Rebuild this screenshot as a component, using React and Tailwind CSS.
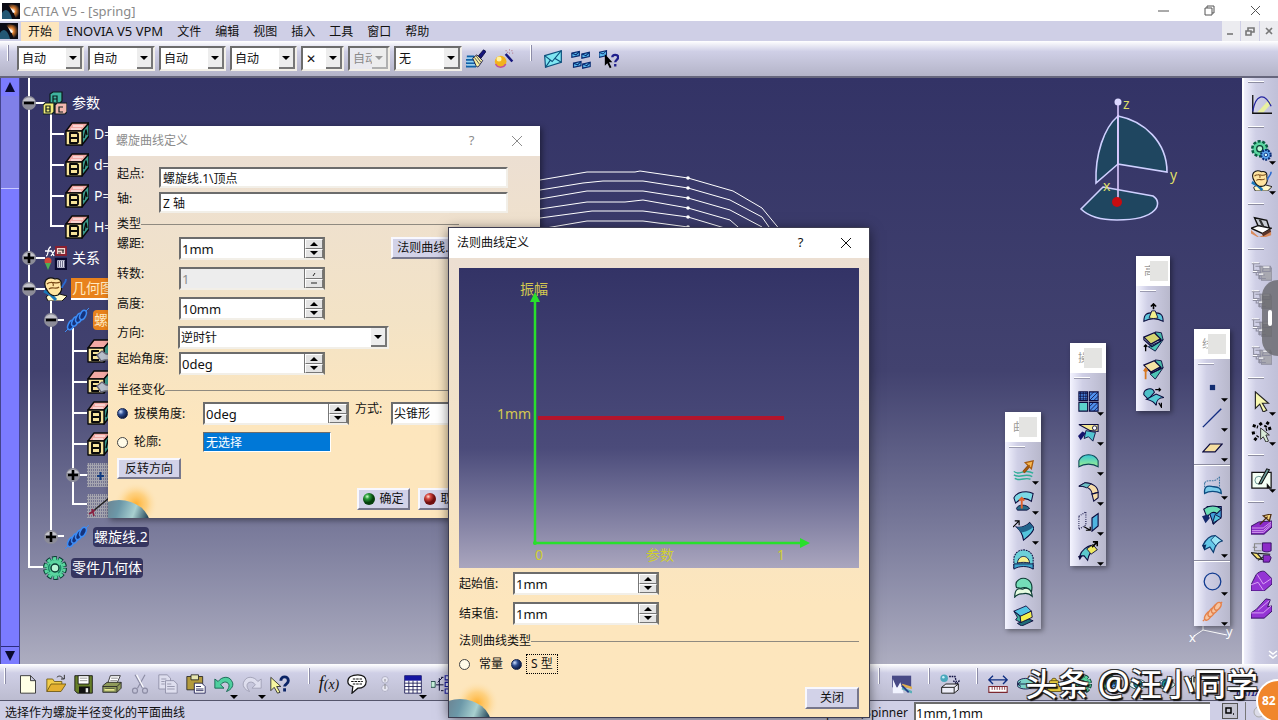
import React from "react";

const K = "#0a0a3c";

/* ---------- icon drawings, 24 x 24 ---------- */
const art = {
  brush: (
    <>
      <path d="M1 9h9M0 13h10M0 17h12M0 21h12" stroke="#0f62a8" strokeWidth="2.200" />
      <path d="M1 11h8M1 15h9M1 19h11" stroke="#8cd4f4" strokeWidth="1.500" />
      <path d="M8 11l5-4 7 7-5 7c-1 1-3 0-3-1z" fill="#f7f0a0" stroke={K} />
      <path d="M10 10l6 8M12 8l6 8" stroke={K} strokeWidth=".8" />
      <path d="M15 8l6-7 3 2-6 8z" fill="#15157c" stroke={K} />
    </>
  ),
  wand: (
    <>
      <circle cx="8" cy="15" r="7" fill="#f2b21c" />
      <circle cx="6" cy="12" r="3" fill="#fff3a0" />
      <path d="M2 18c2 5 10 5 12 0" stroke="#c0509c" strokeWidth="1.800" fill="none" />
      <path d="M14 6l8 9" stroke="#15157c" strokeWidth="3" />
      <path d="M14 2h1M18 1h1M18 5h1M21 2h1M16 4h1M22 5h1" stroke="#b07080" strokeWidth="1.400" />
    </>
  ),
  envelope: (
    <>
      <path d="M2 8l20-6v14L3 22z" fill="#7fe6f2" stroke="#0b4f7c" strokeWidth="1.400" />
      <path d="M2 8l9 7L22 2M3 22l6-9M22 16l-8-5" stroke="#0b4f7c" strokeWidth="1.300" fill="none" />
    </>
  ),
  envelopes: (
    <>
      {[[1, 3], [13, 4], [3, 15], [14, 16]].map(([x, y]) => (
        <g key={x + "-" + y} transform={`translate(${x} ${y})`}>
          <path d="M0 2l9-2v5l-9 2z" fill="#5bbcf0" stroke="#082a70" strokeWidth="1.400" />
          <path d="M0 2l5 2 4-4" stroke="#082a70" strokeWidth="1.300" fill="none" />
        </g>
      ))}
    </>
  ),
  envelopeHelp: (
    <>
      <path d="M0 4l9-2v6l-9 2z" fill="#5bbcf0" stroke="#082a70" strokeWidth="1.300" />
      <path d="M0 4l5 2 4-4" stroke="#082a70" strokeWidth="1.100" fill="none" />
      <path d="M7 6v14l3-3 3 6 2-1-3-6h4z" fill="#000" />
      <path d="M16 10c0-4 7-4 7 0 0 3-3.500 3-3.500 6M19.500 18v3" stroke="#20208c" strokeWidth="2.800" fill="none" />
    </>
  ),
  newFile: <path d="M3 2h12l6 6v15H3zM15 2v6h6" fill="#ffffe6" stroke="#222" />,
  open: (
    <>
      <path d="M1 21V6h7l2 3h9v4" fill="#f2cd4a" stroke="#6a5510" />
      <path d="M1 21l5-9h18l-6 9z" fill="#e4b030" stroke="#6a5510" />
      <path d="M13 4c3-3 6-1 8 2M22 1v5h-4" stroke="#333" fill="none" strokeWidth="1.200" />
    </>
  ),
  save: (
    <>
      <path d="M1 2h21v21H4l-3-3z" fill="#667e28" stroke="#111" />
      <path d="M5 2h13v10H5z" fill="#fff" stroke="#111" />
      <path d="M7 5h9M7 8h9" stroke="#888" />
      <path d="M6 15h13v8H6z" fill="#111" />
      <path d="M14 17h3v5h-3z" fill="#eee" />
    </>
  ),
  print: (
    <>
      <path d="M7 11l3-9h12l-4 9" fill="#fff" stroke="#222" />
      <path d="M11 5h8M10 8h8" stroke="#777" />
      <path d="M1 14l5-4h17v7l-5 5H1z" fill="#8f9a5a" stroke="#222" />
      <path d="M1 15h17l5-5M18 15v7M4 18h11" stroke="#222" fill="none" />
      <path d="M3 18h12v2H3z" fill="#e8e890" />
    </>
  ),
  cut: (
    <g stroke="#8c8ca4" strokeWidth="1.400" fill="none">
      <path d="M6 1l9 16M18 1L9 17" />
      <circle cx="6" cy="20" r="3" /><circle cx="18" cy="20" r="3" />
      <path d="M8 1l8 15" stroke="#fff" />
    </g>
  ),
  copy: (
    <g stroke="#8c8ca4" fill="#dedeee">
      <path d="M1 1h10l4 4v13H1z" /><path d="M9 8h10l4 4v11H9z" />
      <path d="M4 6h6M4 9h4M4 12h4M11 12h5M11 15h9M11 18h9" />
    </g>
  ),
  paste: (
    <>
      <path d="M1 3h19v16H1z" fill="#b39a3c" stroke="#222" />
      <path d="M6 1h9v6H6z" fill="#e6e6b0" stroke="#222" />
      <path d="M10 11h9l4 4v8H10z" fill="#fff" stroke="#15154c" />
      <path d="M12 15h6M12 18h9M12 20h9" stroke="#15154c" />
    </>
  ),
  undo: <path d="M1 6v11h11l-4-4c3-5 10-4 10 1 0 3-2 5-3 7 6-2 10-8 6-13C18 2 9 3 5 9z" fill="#4fcf9f" stroke="#0d5c48" />,
  redo: <path d="M23 6v11H12l4-4c-3-5-10-4-10 1 0 3 2 5 3 7C3 19-1 13 3 8 6 2 15 3 19 9z" fill="#dedeee" stroke="#9a9ab0" />,
  help: (
    <>
      <path d="M1 4v16l4-4 4 7 3-1-4-7h5z" fill="#f6f6a0" stroke="#222" />
      <path d="M13 8c0-6 9-6 9 0 0 4-4.500 4-4.500 7M17.500 17v4" stroke="#0b2466" strokeWidth="3.400" fill="none" />
    </>
  ),
  chat: (
    <>
      <path d="M13 1c6 0 10 3 10 8s-4 8-10 8l-7 6 1-8C3 14 1 12 1 9c0-5 5-8 12-8z" fill="#fff" stroke="#111" strokeWidth="1.500" />
      <path d="M7 6h12M5 9h14M7 12h11" stroke="#111" strokeWidth="1.300" strokeDasharray="3 1" />
    </>
  ),
  link: (
    <g stroke="#a8a8be" fill="#e6e6f2"><circle cx="12" cy="7" r="4" /><circle cx="12" cy="17" r="4" /><path d="M12 6v3M12 12v6" stroke="#777" /></g>
  ),
  sheet: (
    <>
      <path d="M2 2h20v21H2z" fill="#fff" stroke="#141450" />
      <path d="M2 2h20v6H2z" fill="#1414a0" />
      <path d="M2 11h20M2 15h20M2 19h20M7 8v15M12 8v15M17 8v15" stroke="#141450" />
    </>
  ),
  tree: (
    <>
      <path d="M0 9h5v7H0z" fill="#c6f0da" stroke="#143c3c" />
      <path d="M6 13h9M10 5v15M8 10l6-6M12 4h3M12 20h3" stroke="#14143c" fill="none" strokeWidth="1.200" />
      <path d="M17 2h6v5h-6zM17 10h6v5h-6zM17 18h6v5h-6z" fill="#dfe2ff" stroke="#1818a0" strokeWidth="1.300" />
    </>
  ),
  photo: (
    <>
      <path d="M0 2h23v14H0z" fill="#484a86" />
      <path d="M1 23V6l5 11 4-7 4 13z" fill="#f1f3ff" />
      <path d="M12 13l12 4" stroke="#e0b050" strokeWidth="3" /><path d="M12 17l12 5" stroke="#5ab0b8" strokeWidth="3" />
      <path d="M12 14l8 8" stroke="#243c88" strokeWidth="2" />
    </>
  ),
  cubeSwap: (
    <>
      <circle cx="5" cy="5" r="4.500" fill="#4aa8bc" /><circle cx="4" cy="4" r="1.500" fill="#c8f0f8" />
      <path d="M11 3h7l2 8M16 8l4 4 4-5" stroke={K} strokeDasharray="2 1" fill="none" strokeWidth="1.600" />
      <path d="M2 16l5-4h15v7l-5 4H2zM2 16h15v7M17 16l5-4" fill="#ededf7" stroke="#222" strokeWidth="1.200" />
    </>
  ),
  measure: (
    <>
      <path d="M1 7h22M6 2L1 7l5 5M18 2l5 5-5 5" stroke="#0c2c80" strokeWidth="1.600" fill="none" />
      <path d="M1 15h22v7H1z" fill="#fff" stroke="#7c2830" strokeWidth="1.300" /><path d="M5 15v4M8 15v4M11 15v4M14 15v4M17 15v4M20 15v4" stroke="#7c2830" />
    </>
  ),
  measureItem: (
    <>
      <path d="M2 9c4-5 15-5 19 0v6c-4 4-15 4-19 0z" fill="#7ad2c8" stroke={K} />
      <path d="M2 12h20M6 9l-4 3 4 3" stroke={K} fill="none" />
    </>
  ),
  weight: <path d="M7 8h10l4 13H3zM9 8a3 3 0 116 0" fill="#e3c83c" stroke="#5c4a10" />,
  eye: (
    <>
      <path d="M1 13c6-9 16-9 22 0-6 7-16 7-22 0z" fill="#e8f4f4" stroke="#0c4444" />
      <circle cx="12" cy="12" r="5" fill="#1b8f92" stroke={K} /><circle cx="12" cy="12" r="2" fill="#000" />
    </>
  ),
  hand: <path d="M6 12V6l3-1v5-7l3-1v8-6l3 1v6-3l3 1v9l-4 5H9z" fill="#e6f0ea" stroke="#222" />,
  /* tree */
  abc: (
    <g stroke="#0c1c1c" strokeWidth="1.200">
      <path d="M7 3l3-2h9v9l-2 2H7z" fill="#3fb4a0" /><path d="M0 14l2-2h9v9l-2 2H0z" fill="#f2ec78" />
      <path d="M12 14l2-2h10v9l-2 2H12z" fill="#f3b8b0" />
      <path d="M10 11V5h4v6M10 8h4M3 15h4v6H3zM3 18h4M20 16h-4v5h4" fill="none" />
    </g>
  ),
  cube: (
    <g stroke="#0a0a0a" strokeWidth="1.400" strokeLinejoin="round">
      <path d="M1 9l6-8h17l-7 8z" fill="#f2a9a4" /><path d="M17 9l7-8v13l-7 9z" fill="#3a9a8c" />
      <path d="M1 9h16v14H1z" fill="#f7e49a" /><path d="M8 4h10M6 7h10" stroke="#fff" strokeWidth="1" />
      <path d="M5 11h7l1 1v8l-1 1H5zM5 16h7" fill="none" strokeWidth="1.900" /><path d="M19 16l2-8 1 5" fill="none" />
    </g>
  ),
  cubeMouse: (
    <g stroke="#0a0a0a" strokeWidth="1.400" strokeLinejoin="round">
      <path d="M1 9l6-8h17l-7 8z" fill="#f2a9a4" /><path d="M17 9l7-8v13l-7 9z" fill="#3a9a8c" />
      <path d="M1 9h16v14H1z" fill="#f7e49a" /><path d="M12 12H5v9h7M5 16h6" fill="none" strokeWidth="1.900" />
      <path d="M10 16l5-4 4 3h5v6h-6l-4 1z" fill="#b6beca" stroke="#667" />
    </g>
  ),
  relations: (
    <>
      <path d="M3 10c3 0 1-9 5-9M2 5h6M8 4l3 6M12 4l-4 6" stroke="#fff" fill="none" strokeWidth="1.300" />
      <path d="M13 1h10v8H13z" fill="#f4d6d0" stroke="#8a2030" strokeWidth="1.800" /><path d="M15 4h6M15 7h3M20 4v3" stroke="#222" strokeWidth="1.200" />
      <path d="M13 13h10v10H13z" fill="#dde" stroke="#0a0a30" strokeWidth="2.400" /><path d="M15 16h7M15 18h7M15 20h7" stroke="#0a0a30" strokeDasharray="1 1" />
      <circle cx="5" cy="15" r="3.500" fill="#d04838" /><path d="M2 17h6l-3 7z" fill="#4fae55" />
    </>
  ),
  geoSet: (
    <>
      <path d="M3 20l6-5 15 4-5 5H5z" fill="#fff8c8" stroke="#111" />
      <path d="M1 14l7 4 5 5" stroke="#1a76b8" strokeWidth="3" fill="none" />
      <path d="M3 3c3-3 7-2 9-1 3-1 7 1 6 5 1 5 1 8-3 11-5 2-9-1-11-5-2-3-3-7-1-10z" fill="#ffe4a0" stroke="#111" strokeWidth="1.200" />
      <path d="M4 7c4-4 9 1 13-2M6 12c3-3 7 1 10-2M8 5c2 1 3 2 2 4" stroke="#7a4a18" fill="none" strokeWidth="1.200" />
      <path d="M23 2c0 5-4 5-4 9" stroke="#2a6ad0" strokeWidth="1.800" fill="none" />
    </>
  ),
  coil: (
    <g stroke="#3d8cf5" strokeWidth="1.500" fill="#16337c">
      <path d="M0 24L24 0" strokeWidth="1" />
      <ellipse cx="6" cy="17" rx="2.800" ry="5" transform="rotate(25 6 17)" /><ellipse cx="10" cy="13.500" rx="2.800" ry="5" transform="rotate(25 10 13.500)" />
      <ellipse cx="14" cy="10" rx="2.800" ry="5" transform="rotate(25 14 10)" /><ellipse cx="18" cy="7" rx="2.800" ry="5" transform="rotate(25 18 7)" />
    </g>
  ),
  gear: (
    <>
      <circle cx="12" cy="12" r="9.500" fill="#4fcf9c" stroke="#0b3c34" strokeWidth="5" strokeDasharray="4.400 1.570" />
      <circle cx="12" cy="12" r="9.300" fill="none" stroke="#5ad6a0" strokeWidth="3.200" strokeDasharray="3.300 2.540" strokeDashoffset="-.5" />
      <circle cx="12" cy="12" r="8" fill="#5ad6a0" /><circle cx="12" cy="12" r="4" fill="#b6f6d4" stroke="#0b3c34" strokeWidth="1.500" />
      <path d="M7 16a7 7 0 010-8M17 9a6 6 0 01-2 8" stroke="#1d8a68" fill="none" strokeWidth="1.500" />
    </>
  ),
  hatchPoint: (
    <>
      <path d="M0 0h24v24H0z" fill="#a4a4ae" /><path d="M0 1h24M0 4h24M0 7h24M0 10h24M0 13h24M0 16h24M0 19h24M0 22h24" stroke="#666688" strokeDasharray="1 1" strokeWidth="1.500" />
      <path d="M10 13h7M13.500 9v8" stroke="#123c80" strokeWidth="2" />
    </>
  ),
  hatchLine: (
    <>
      <path d="M0 0h24v24H0z" fill="#a4a4ae" /><path d="M0 1h24M0 4h24M0 7h24M0 10h24M0 13h24M0 16h24M0 19h24M0 22h24" stroke="#666688" strokeDasharray="1 1" strokeWidth="1.500" />
      <path d="M5 18L22 4" stroke="#222" strokeWidth="1.500" /><path d="M2 20l6-4M5 15l2 7" stroke="#8a2040" strokeWidth="1.600" />
    </>
  ),
  /* surfaces */
  extrudeUp: (
    <>
      <path d="M1 21c0-8 3-10 11-10s11 2 11 10c-7-4-15-4-22 0z" fill="#5cc4da" stroke={K} strokeWidth="1.200" />
      <path d="M7 17l3-8h4l3 8c-3 1-7 1-10 0z" fill="#f4f08c" stroke={K} /><path d="M12 7V1M9 4l3-3 3 3" stroke="#000" strokeWidth="1.800" fill="none" />
    </>
  ),
  wrapA: (
    <>
      <path d="M6 18l11-5 6-3-9 13z" fill="#4cc4b4" stroke={K} /><path d="M14 1l7 1 2 8-7 1z" fill="#48b8a8" stroke={K} />
      <path d="M1 7l12-5 7 7-11 6z" fill="#d4d470" stroke={K} strokeWidth="1.400" /><path d="M1 7v3l9 8 10-6V9" fill="none" stroke={K} strokeWidth="1.300" />
      <path d="M3 23v-7M1 18l2-2 2 2" stroke="#000" fill="none" strokeWidth="1.500" />
    </>
  ),
  wrapB: (
    <>
      <path d="M8 17l9-4 6-3-9 13z" fill="#4cc4b4" stroke={K} /><path d="M14 1l7 1 2 8-7 1z" fill="#48b8a8" stroke={K} />
      <path d="M1 7l12-5 7 7-11 6z" fill="#f4e2a4" stroke={K} strokeWidth="1.400" /><path d="M6 12l4 4 10-5V9" fill="none" stroke={K} strokeWidth="1.300" />
      <path d="M3 23V11M1 14l2-3 2 3" stroke="#d87820" fill="none" strokeWidth="2" />
    </>
  ),
  morph: (
    <>
      <path d="M1 9c-1-7 10-10 12-3l-7 8z" fill="#4cc0c8" stroke={K} strokeWidth="1.200" /><path d="M4 14l11-6 9 4c-6 0-9 4-9 9-2-4-7-6-11-7z" fill="#56cad4" stroke={K} strokeWidth="1.200" />
      <path d="M14 3h6M18 1l2 2-2 2M18 18l3 5v-5" stroke="#000" fill="none" strokeWidth="1.400" />
    </>
  ),
  grid4: (
    <>
      <path d="M1 1h10v10H1zM13 1h10v10H13zM13 13h10v10H13z" fill="#4f8fec" stroke={K} strokeWidth="1.200" /><path d="M1 13h10v10H1z" fill="#5cd2cc" stroke={K} strokeWidth="1.200" />
      <path d="M1 6h10M6 1v10M3 1v10M1 3h10M1 9h10M9 1v10M13 6l5-5M13 11l10-10M18 11l5-5M13 18l5-5M13 23l10-10M18 23l5-5" stroke={K} strokeWidth=".9" />
    </>
  ),
  flagCut: (
    <>
      <path d="M1 4h22v8l-9-1z" fill="#f4e690" stroke={K} strokeWidth="1.200" /><path d="M9 11l11 2-3 10-5-5-5 2z" fill="#52c4d0" stroke={K} />
      <path d="M0 17l5-5 4 2-6 8z" fill="#14146c" /><circle cx="19" cy="8" r="2.500" fill="#fff" stroke={K} />
    </>
  ),
  dome: <path d="M1 18V11c4-9 18-9 22 0v7c-6-4-16-4-22 0z" fill="url(#domeFill)" stroke="#0c4454" strokeWidth="1.200" />,
  bend: (
    <>
      <path d="M1 6l7-4c9 0 15 5 15 11l-7 2c0-6-7-10-15-9z" fill="#f6dca8" stroke={K} strokeWidth="1.200" /><path d="M1 6l7-4 7 1-5 5c-3-2-6-2-9-2z" fill="#6cc0c4" stroke={K} />
      <path d="M16 15l7-2v6l-5 4z" fill="#f6dca8" stroke={K} strokeWidth="1.200" />
    </>
  ),
  translate: (
    <>
      <path d="M1 6l8-5v15l-8 5z" fill="none" stroke={K} strokeDasharray="1 1.500" strokeWidth="1.300" /><path d="M16 8l7-5v14l-7 6z" fill="#4fb4e0" stroke={K} strokeWidth="1.300" />
      <path d="M7 18l7 4M14 18v4h-5" stroke="#000" fill="none" strokeWidth="1.400" />
    </>
  ),
  extrap: (
    <>
      <path d="M2 17c2-7 9-11 13-12l6 5c-6 1-9 5-10 12l-4-5z" fill="#5cc8cc" stroke={K} strokeWidth="1.200" /><path d="M10 9l7-5 5 6-7 5z" fill="#f0ea60" stroke={K} />
      <path d="M16 7l6-6M17 1h5v5" stroke="#000" strokeWidth="1.800" fill="none" /><path d="M0 17l5 0-3 5z" fill={K} />
    </>
  ),
  ripple: (
    <>
      <path d="M1 13c6 6 11-4 22 2M1 17c8 5 12-3 21 2M2 21c8 4 11-2 18 1" stroke="#2fae98" strokeWidth="1.600" fill="none" />
      <path d="M12 14l7-8" stroke="#8a4c10" strokeWidth="3.500" /><path d="M12 14l7-8M14 3l9-2-2 9z" stroke="#a85c10" fill="#f8b850" strokeWidth="1.500" />
    </>
  ),
  sheetUp: (
    <>
      <path d="M1 9c3-7 15-9 22-5l-2 9C15 8 9 9 3 15z" fill="#7cd8e4" stroke={K} strokeWidth="1.200" /><path d="M4 21c2-5 11-5 15 0l-3 2H5z" fill="#286c88" stroke={K} />
      <path d="M10 21V9M7 12l3-3 3 3" stroke="#e0622c" strokeWidth="2.200" fill="none" />
    </>
  ),
  sweep: (
    <>
      <path d="M4 8c7 1 12-2 15-5l5 6c-1 6-7 10-12 14-1-7-3-11-8-15z" fill="#54c4dc" stroke={K} strokeWidth="1.200" /><path d="M4 8c7 1 12-2 15-5l4 5c-3 3-8 6-14 6z" fill="#22648c" />
      <path d="M0 8l7-7M2 1h5v5" stroke="#000" fill="none" strokeWidth="1.300" />
    </>
  ),
  bridge: (
    <>
      <path d="M1 22V10C4-2 20-2 23 10v12c-6-4-16-4-22 0z" fill="#6cd0d8" stroke={K} strokeDasharray="2 1" strokeWidth="1.200" /><path d="M5 16c1-10 13-10 14 0-4-1-10-1-14 0z" fill="#f6f08c" stroke={K} />
      <path d="M1 17h22v6c-6-4-16-4-22 0z" fill="#3ca4cc" stroke={K} />
    </>
  ),
  blend: (
    <>
      <path d="M4 12C1 4 10-1 17 3c6 4 5 10 4 14-3-5-8-6-12-4z" fill="#74ddb8" stroke="#0c3c34" strokeWidth="1.300" /><path d="M2 23c0-8 3-11 9-9 5-3 10 0 11 8-3-3-6-4-10-3-3 0-7 0-10 4z" fill="#e6fbe0" stroke="#0c3c34" strokeWidth="1.300" />
    </>
  ),
  offset: (
    <>
      <path d="M5 21l13-5 5 2-13 6z" fill="#1f6c78" stroke={K} /><path d="M1 7l14-6 6 6-12 6z" fill="#52c4e4" stroke={K} />
      <path d="M8 13l13-6 1 7-13 6z" fill="#f2f04c" stroke={K} /><path d="M1 7l7 6 1 7-6-3 2-3z" fill="#3cae9c" stroke={K} />
    </>
  ),
  point: <path d="M9 9h6v6H9z" fill="#122c70" />,
  line: <path d="M1 23L22 2" stroke="#122c80" strokeWidth="1.600" />,
  plane: <path d="M1 17l8-9h14l-8 9z" fill="#f6dfa0" stroke={K} strokeWidth="1.400" />,
  project: (
    <>
      <path d="M3 21c-1-8 3-9 8-8s11 0 11 8c-6-3-14-3-19 0z" fill="#7cccea" stroke="#0c4c80" strokeWidth="1.500" /><path d="M3 9c5-6 10 2 17-7M3 9v5M20 2v12" stroke="#3c74a0" strokeDasharray="2 1" fill="none" strokeWidth="1.200" />
    </>
  ),
  trim: (
    <>
      <path d="M6 3h16v12l-9 8z" fill="#3f9ed8" stroke={K} strokeWidth="1.200" /><path d="M2 6c6-5 15-5 20 0l-5 5C13 8 8 10 6 16z" fill="#6cdcb4" stroke={K} strokeWidth="1.200" /><path d="M0 14l6-2 3 4-5 6z" fill="#14286c" />
      <path d="M12 22l3-10 7 4z" fill="#54c4dc" stroke={K} />
    </>
  ),
  fold: (
    <>
      <path d="M1 14C5 6 11 3 15 3l8 6c-6 1-8 6-10 13l-4-6-6 3z" fill="#64c8e8" stroke="#0c3c70" strokeWidth="1.400" /><path d="M15 3l8 6c-4 1-6 3-7 6l-6-7z" fill="#98e4f4" stroke="#0c3c70" /><path d="M0 14l5-1-2 7z" fill="#0c2c60" />
    </>
  ),
  circle: <circle cx="12" cy="12" r="9.500" fill="none" stroke="#123c90" strokeWidth="1.500" />,
  helix: (
    <g stroke="#e4824c" strokeWidth="1.600" fill="#f6c4a0">
      <path d="M1 23L23 1" />
      <ellipse cx="7" cy="17" rx="3" ry="5.500" transform="rotate(35 7 17)" /><ellipse cx="11" cy="13" rx="3" ry="5.500" transform="rotate(35 11 13)" /><ellipse cx="15" cy="9" rx="3" ry="5.500" transform="rotate(35 15 9)" /><ellipse cx="18" cy="6" rx="3" ry="5" transform="rotate(35 18 6)" />
    </g>
  ),
  /* right dock */
  curve: (
    <>
      <path d="M7 21L21 6l2 5-9 10z" fill="#e8f0a0" /><path d="M2 1v21h22" stroke="#111" strokeWidth="1.500" fill="none" /><path d="M2 20C5 1 15-3 23 14" stroke="#2424a0" fill="none" strokeWidth="1.400" />
    </>
  ),
  gears: (
    <>
      <circle cx="10" cy="10" r="8.500" fill="#5ad6a0" stroke="#0b5c44" strokeWidth="3" strokeDasharray="3.400 1.940" /><circle cx="10" cy="10" r="7" fill="#5ad6a0" /><circle cx="10" cy="10" r="3.500" fill="#b6f6d4" stroke="#0b3c34" strokeWidth="1.400" />
      <circle cx="17" cy="17" r="5.500" fill="#5ca8f0" stroke="#0a2c78" strokeWidth="2.400" strokeDasharray="2.300 1.160" /><circle cx="17" cy="17" r="2" fill="#dff" stroke="#0a2c78" />
    </>
  ),
  catalog: (
    <>
      <path d="M0 16l9 8 14-6v4l-12 4-11-6z" fill="#d88a5c" /><path d="M4 2l14 3 3 9-13-3z" fill="#c8ccd4" stroke="#111" strokeWidth="1.600" />
      <path d="M0 14l8-3 15 3-10 6z" fill="#fff" stroke="#111" strokeWidth="1.600" /><path d="M10 4l4 8" stroke="#333" strokeWidth="2.500" /><path d="M12 20l10-5 1 3-9 5z" fill="#5a3428" />
    </>
  ),
  ghost: (
    <g stroke="#8e8ea0" fill="#dcdce8" strokeWidth="1.300">
      <path d="M10 6h12l2 4v12H12z" fill="#a8a8b0" /><path d="M1 3h9M3 1v10h7M5 6h7M6 10v6h7M2 13h7v7h8M8 16h8M10 12v9M14 8h8v4h-9z" fill="none" />
      <path d="M1 2h8M2 12h5M9 15h5M14 7h7" stroke="#fff" />
    </g>
  ),
  arrow: <path d="M5 1v19l5-5 4 9 4-2-5-8h7z" fill="#f8f8b0" stroke="#222" strokeWidth="1.300" />,
  select: (
    <>
      <path d="M2 5l6 2M1 14l5-1M4 22l4-5M10 2l3 4M20 1l-4 6M23 8l-6 2" stroke="#000" strokeWidth="3.400" strokeDasharray="3.500 1.500" />
      <path d="M11 8v13l3-3 3 6 3-1-3-7h4z" fill="#d8ead8" stroke="#222" />
    </>
  ),
  sketch: (
    <>
      <path d="M1 5h22v18H1z" fill="#f4fff4" stroke="#111" strokeWidth="1.400" /><circle cx="9" cy="14" r="4.500" fill="none" stroke="#5a8a8a" /><path d="M9 18L18 1l3 1-9 16z" fill="#6a9c98" stroke="#111" strokeWidth="1.200" /><path d="M18 17l5 6h-5z" fill="#111" />
    </>
  ),
  thick: (
    <>
      <path d="M0 14l9-5 15-1v7l-9 8H0z" fill="#8c2cc8" stroke="#2c0858" /><path d="M1 16h13l9-7M1 19h13l9-8M1 21h13l9-8" stroke="#e4b8f8" fill="none" strokeWidth=".9" /><path d="M10 12l9-9M14 2l9-2-2 8z" fill="#f8d880" stroke="#4c2c10" strokeWidth="1.400" />
    </>
  ),
  split: (
    <>
      <path d="M13 1h10v9c-5 3-10 0-10 0zM14 15h7l2 3-2 5h-7z" fill="#8c2cc8" stroke="#2c0858" /><path d="M12 2H4v8h8M2 6h5" fill="none" stroke="#888" strokeWidth="1.300" /><path d="M0 12l7 1 6 7-6-1z" fill="#f6e070" stroke="#222" strokeWidth="1.300" /><path d="M8 13l14 1M8 21l6-4" stroke="#222" strokeWidth="1.300" />
    </>
  ),
  solidA: (
    <>
      <path d="M0 17L6 5c5-5 10-4 11-2l7 7v6l-9 8H0z" fill="#9434d4" stroke="#2c0858" /><path d="M7 5l7 11 9-6M0 17l8-3 6 9" stroke="#e0b0f8" fill="none" />
    </>
  ),
  solidB: (
    <>
      <path d="M0 17l6-4L17 1l5 1-3 8 5-1v6l-9 8H0z" fill="#9434d4" stroke="#2c0858" /><path d="M0 17h14l9-8M8 14L21 3" stroke="#e0b0f8" fill="none" />
    </>
  ),
};

function Icon({ name, className = "h-6 w-6" }) {
  return (
    <svg viewBox="0 0 24 24" fill="none" aria-hidden="true" className={`${className} shrink-0`}>
      {art[name]}
    </svg>
  );
}

function AppIcon() {
  return (
    <svg viewBox="0 0 18 16" aria-hidden="true" className="h-4 w-[18px] shrink-0">
      <path d="M0 0h18v16H0z" fill="#0b0b14" />
      <path d="M4 0l14 3v8l-4 5-3-8z" fill="url(#appGlow)" />
      <path d="M0 10c4-6 8-2 10 6H0z" fill="#235874" />
      <path d="M8 4l5 5-2 1z" fill="#fff" />
    </svg>
  );
}

function Defs() {
  return (
    <svg aria-hidden="true" className="absolute h-0 w-0">
      <defs>
        <radialGradient id="appGlow"><stop offset="0" stopColor="#fff" /><stop offset=".4" stopColor="#e08030" /><stop offset="1" stopColor="#0b0b14" /></radialGradient>
        <linearGradient id="domeFill" x1="0" y1="0" x2="0" y2="1"><stop offset="0" stopColor="#38c4d4" /><stop offset="1" stopColor="#9cf090" /></linearGradient>
        <radialGradient id="sun"><stop offset="0" stopColor="#ffb030" /><stop offset=".5" stopColor="#ffc868" stopOpacity=".7" /><stop offset="1" stopColor="#fde6bd" stopOpacity="0" /></radialGradient>
        <linearGradient id="planet" x1="0" y1="0" x2="1" y2=".3"><stop offset="0" stopColor="#6c6a78" /><stop offset=".5" stopColor="#6c98a8" /><stop offset=".75" stopColor="#a8d0d0" /><stop offset="1" stopColor="#1c3c50" /></linearGradient>
        <radialGradient id="okBall" cx=".35" cy=".3"><stop offset="0" stopColor="#d4ffd0" /><stop offset=".4" stopColor="#2ca03c" /><stop offset="1" stopColor="#06400c" /></radialGradient>
        <radialGradient id="noBall" cx=".35" cy=".3"><stop offset="0" stopColor="#ffe0d8" /><stop offset=".4" stopColor="#d84840" /><stop offset="1" stopColor="#701010" /></radialGradient>
      </defs>
    </svg>
  );
}

const sunken = "border-2 border-t-[#6c6c6c] border-l-[#6c6c6c] border-r-[#f2efe8] border-b-[#f2efe8]";

function Combo({ label, value, width, disabled, id }) {
  return (
    <div className={`relative shrink-0 ${width}`}>
      <select
        id={id}
        aria-label={id ? undefined : label}
        disabled={disabled}
        className={`block h-full w-full appearance-none rounded-none text-xs leading-4 disabled:opacity-100 ${id ? "pl-px" : "pl-[3px]"} ${disabled ? "bg-[#e9e9ef] text-[#8a8a8a]" : "bg-white text-[#111]"} ${sunken}`}
      >
        <option>{value}</option>
      </select>
      <span className={`pointer-events-none absolute inset-y-0.5 right-0.5 flex w-4 items-center justify-center border-r-2 border-b-2 bg-[#ededed] ${disabled ? "border-[#b0b0b0] text-[#9a9a9a]" : "border-[#777] text-black"}`}>
        <svg viewBox="0 0 8 4" className="h-1 w-2" aria-hidden="true"><path d="M0 0h8L4 4z" fill="currentColor" /></svg>
      </span>
    </div>
  );
}

function Spinner({ id, value, disabled }) {
  const half = "flex flex-1 items-center justify-center border border-t-white border-l-white border-r-[#777] border-b-[#777] bg-[#e4e4e4]";
  return (
    <div className={`flex h-[23px] w-[146px] shrink-0 ${disabled ? "bg-[#ededed]" : "bg-white"} border-2 border-t-[#6c6c6c] border-l-[#6c6c6c] border-r-[#77746c] border-b-[#f2efe8]`}>
      <input id={id} defaultValue={value} disabled={disabled} className="min-w-0 flex-1 bg-transparent pl-px text-[13px] leading-4 text-[#111] outline-none disabled:text-[#8c8c8c]" />
      <div className="flex w-[19px] flex-col border-l border-[#777]">
        <button type="button" aria-label="增加" disabled={disabled} className={half}>
          <svg viewBox="0 0 8 4" className="h-1 w-2" aria-hidden="true"><path d={disabled ? "M3 4l2-3" : "M0 4h8L4 0z"} stroke={disabled ? "#222" : "none"} /></svg>
        </button>
        <button type="button" aria-label="减少" disabled={disabled} className={half}>
          <svg viewBox="0 0 8 4" className="h-1 w-2" aria-hidden="true"><path d={disabled ? "M1 2h6" : "M0 0h8L4 4z"} stroke={disabled ? "#222" : "none"} /></svg>
        </button>
      </div>
    </div>
  );
}

function PushButton({ children, className = "" }) {
  return (
    <button type="button" className={`flex shrink-0 items-center justify-center gap-1 whitespace-nowrap border-2 border-t-[#f8f8ff] border-l-[#f8f8ff] border-r-[#77778c] border-b-[#77778c] bg-[#d2d2e8] text-xs leading-4 text-[#111] ${className}`}>
      {children}
    </button>
  );
}

function Radio({ id, name, checked }) {
  return (
    <input
      id={id}
      name={name}
      type="radio"
      defaultChecked={checked}
      className="h-[11px] w-[11px] shrink-0 appearance-none rounded-full border border-[#444] bg-[#fffbe8] checked:border-[#16244c] checked:bg-[radial-gradient(circle_at_30%_30%,#cfe0ff_0,#2c4c90_35%,#0b1638_80%)]"
    />
  );
}

function Legend({ children, rule = "flex-1" }) {
  return (
    <div className="flex h-4 shrink-0 items-center text-xs leading-4">
      <span>{children}</span>
      <span className={`h-px bg-[#8f8a80] ${rule}`} />
    </div>
  );
}

function DialogTitle({ title, muted }) {
  const ink = muted ? "text-[#8c8c8c]" : "text-[#111]";
  return (
    <header className={`flex h-[30px] shrink-0 items-center bg-white pl-2 text-xs ${ink}`}>
      <h2 className="flex-1">{title}</h2>
      <button type="button" aria-label="帮助" className="w-[45px] text-center text-[13px]">?</button>
      <button type="button" aria-label="关闭窗口" className="flex w-[46px] justify-center">
        <svg viewBox="0 0 12 12" className="h-3 w-3" aria-hidden="true"><path d="M1 1l10 10M11 1L1 11" stroke="currentColor" fill="none" /></svg>
      </button>
    </header>
  );
}

function Planet() {
  return (
    <svg viewBox="0 0 56 40" aria-hidden="true" className="pointer-events-none absolute bottom-0 left-0 h-10 w-14">
      <circle cx="28" cy="26" r="22" fill="url(#sun)" />
      <ellipse cx="11" cy="47" rx="31" ry="25" fill="url(#planet)" />
    </svg>
  );
}

const body = "relative flex flex-col bg-linear-to-b from-[#ecdfd2] via-[#f3e3c6] via-45% to-[#fde6bd] to-75%";

function HelixDialog() {
  const label = "w-[62px] shrink-0 whitespace-nowrap leading-[14px]";
  return (
    <section aria-label="螺旋曲线定义" className="absolute top-[126px] left-[108px] w-[432px] text-xs text-[#111] shadow-[2px_2px_6px_rgba(0,0,0,.45)]">
      <DialogTitle title="螺旋曲线定义" muted />
      <form className={`${body} pt-[11px] pr-8 pb-2 pl-[9px]`}>
        <div className="flex"><label htmlFor="start" className="w-[42px] leading-[14px]">起点:</label><input id="start" defaultValue="螺旋线.1\顶点" className={`h-[21px] min-w-0 flex-1 bg-white pl-0.5 ${sunken}`} /></div>
        <div className="mt-1 flex"><label htmlFor="axis" className="w-[42px] leading-[14px]">轴:</label><input id="axis" defaultValue="Z 轴" className={`h-[21px] min-w-0 flex-1 bg-white pl-0.5 ${sunken}`} /></div>
        <div className="mt-[3px]"><Legend rule="w-[318px]">类型</Legend></div>
        <div className="mt-[5px] flex flex-col gap-[7px]">
          <div className="flex h-[23px]">
            <label htmlFor="pitch" className={label}>螺距:</label><Spinner id="pitch" value="1mm" />
            <PushButton className="ml-[66px] h-[22px] w-[70px]">法则曲线...</PushButton>
          </div>
          <div className="flex"><label htmlFor="turns" className={label}>转数:</label><Spinner id="turns" value="1" disabled /></div>
          <div className="flex"><label htmlFor="height" className={label}>高度:</label><Spinner id="height" value="10mm" /></div>
        </div>
        <div className="mt-1.5 flex h-[23px]"><label htmlFor="dir" className="w-[61px] leading-[14px]">方向:</label><Combo id="dir" value="逆时针" width="w-[211px]" /></div>
        <div className="mt-[3px] flex"><label htmlFor="angle" className={label}>起始角度:</label><Spinner id="angle" value="0deg" /></div>
        <div className="mt-[7px]"><Legend>半径变化</Legend></div>
        <div className="mt-1 flex h-[23px] items-center">
          <Radio id="taper" name="radius" checked /><label htmlFor="taper" className="ml-[6px] w-[69px] whitespace-nowrap">拔模角度:</label>
          <Spinner value="0deg" id="taper-value" />
          <label htmlFor="way" className="ml-1.5 w-9 self-start leading-[14px]">方式:</label><Combo id="way" value="尖锥形" width="h-[23px] w-20" />
        </div>
        <div className="mt-[7px] flex h-5 items-center">
          <Radio id="profile" name="radius" /><label htmlFor="profile" className="ml-[6px] w-[69px]">轮廓:</label>
          <input aria-label="轮廓选择" defaultValue="无选择" className="h-5 w-[128px] border border-t-[#6c6c6c] border-l-[#6c6c6c] border-r-white border-b-white bg-[#0078d7] pl-0.5 text-white" />
        </div>
        <PushButton className="mt-1.5 h-[21px] w-16">反转方向</PushButton>
        <div className="mt-[9px] ml-[240px] flex gap-2">
          <PushButton className="h-[22px] w-[53px]"><svg viewBox="0 0 12 12" className="h-3 w-3" aria-hidden="true"><circle cx="6" cy="6" r="6" fill="url(#okBall)" /></svg>确定</PushButton>
          <PushButton className="h-[22px] w-[53px]"><svg viewBox="0 0 12 12" className="h-3 w-3" aria-hidden="true"><circle cx="6" cy="6" r="6" fill="url(#noBall)" /></svg>取消</PushButton>
        </div>
        <Planet />
      </form>
    </section>
  );
}

function LawDialog() {
  return (
    <section aria-label="法则曲线定义" className="absolute top-[228px] left-[449px] w-[420px] text-xs text-[#111] shadow-[0_2px_12px_rgba(0,0,0,.6)] ring-1 ring-[#3c3c50]">
      <DialogTitle title="法则曲线定义" />
      <form className={`${body} px-2.5 pt-2.5 pb-2`}>
        <svg viewBox="0 0 400 300" className="h-[300px] w-full bg-linear-to-b from-[#333366] via-[#4b4b7a] via-60% to-[#aaa6be]" role="img" aria-label="振幅 / 参数">
          <path d="M76 34v241h266" fill="none" stroke="#28e02c" strokeWidth="2.500" />
          <path d="M76 24l5 10H71zM351 275l-10-5v10z" fill="#28e02c" />
          <circle cx="76" cy="275" r="2" fill="#28e02c" />
          <path d="M79 150h246" stroke="#b4142c" strokeWidth="4" />
          <g fill="#d4c850" fontSize="14"><text x="61" y="26">振幅</text><text x="38" y="151">1mm</text></g>
          <g fill="#cfcf30" fontSize="14"><text x="76" y="292">0</text><text x="187" y="292">参数</text><text x="318" y="292">1</text></g>
        </svg>
        <div className="mt-1 flex items-center"><label htmlFor="from" className="w-[54px]">起始值:</label><Spinner id="from" value="1mm" /></div>
        <div className="mt-[7px] flex items-center"><label htmlFor="to" className="w-[54px]">结束值:</label><Spinner id="to" value="1mm" /></div>
        <div className="mt-2"><Legend>法则曲线类型</Legend></div>
        <div className="mt-[5px] flex h-5 items-center">
          <Radio id="const" name="law" /><label htmlFor="const" className="mr-2 ml-[9px]">常量</label>
          <Radio id="stype" name="law" checked /><label htmlFor="stype" className="ml-1 border border-dotted border-black px-1 leading-[18px]">S 型</label>
        </div>
        <PushButton className="mt-[13px] h-[22px] w-[54px] self-end">关闭</PushButton>
        <Planet />
      </form>
    </section>
  );
}

function Drop() {
  return <svg viewBox="0 0 8 4" className="absolute right-0.5 bottom-0 h-1 w-[7px]" aria-hidden="true"><path d="M0 0h8L4 4z" fill="#000" /></svg>;
}

function Tool({ name, drop }) {
  return (
    <button type="button" aria-label={name} className={`relative flex w-full shrink-0 items-center justify-center ${drop ? "h-[30px]" : "h-7"}`}>
      <Icon name={name} className="h-[21px] w-[21px]" />
      {drop && <Drop />}
    </button>
  );
}

function Palette({ place, title, children }) {
  return (
    <section aria-label={title} className={`absolute overflow-hidden shadow-[2px_2px_5px_rgba(0,0,0,.4)] ${place}`}>
      <header className="flex h-[30px] items-center overflow-hidden bg-white pl-2 text-[11px] text-[#9a9a9a]">
        <span className="w-1.5 overflow-hidden whitespace-nowrap">{title}</span>
        <span className="h-5 w-[18px] shrink-0 bg-[#e4e4e2]" />
      </header>
      <div className="flex flex-col bg-linear-to-r from-[#f4f4ff] via-[#cfcfe6] via-35% to-[#b8b8cc]">
        <span className="mt-1 ml-1 h-0.5 w-4 border-b border-[#9a9ab0] bg-white" />
        <div className="mt-[7px] flex flex-col">{children}</div>
      </div>
    </section>
  );
}

function Rule() {
  return <span className="mt-0.5 mb-1 h-0.5 border-t border-[#8c8ca0] bg-white" />;
}

function Toggle({ open }) {
  return (
    <svg viewBox="0 0 16 16" className="h-4 w-4 shrink-0" aria-hidden="true">
      <circle cx="8" cy="8" r="7" fill="#8c8c98" /><path d="M2 6a7 7 0 0112 0" fill="#c4c4cc" />
      <path d={open ? "M3 8h10" : "M3 8h10M8 3v10"} stroke="#000" strokeWidth="2.600" />
    </svg>
  );
}

const nodes = [
  { lv: 0, t: "open", icon: "abc", text: "参数" },
  { lv: 1, icon: "cube", text: "D=10mm" },
  { lv: 1, icon: "cube", text: "d=1mm" },
  { lv: 1, icon: "cube", text: "P=1mm" },
  { lv: 1, icon: "cube", text: "H=10mm" },
  { lv: 0, t: "shut", icon: "relations", text: "关系" },
  { lv: 0, t: "open", icon: "geoSet", text: "几何图形集.1", tone: "hot underline" },
  { lv: 1, t: "open", icon: "coil", text: "螺旋线.1", tone: "hot" },
  { lv: 2, icon: "cubeMouse" },
  { lv: 2, icon: "cubeMouse" },
  { lv: 2, icon: "cube" },
  { lv: 2, icon: "cube" },
  { lv: 2, t: "shut", icon: "hatchPoint" },
  { lv: 2, icon: "hatchLine" },
  { lv: 1, t: "shut", icon: "coil", text: "螺旋线.2", tone: "box" },
  { lv: 0, icon: "gear", text: "零件几何体", tone: "box" },
];
const pads = ["pl-px", "pl-[23px]", "pl-[45px]"];
const tones = {
  hot: "rounded-sm bg-[#e8821c] text-[#ffe9c0]",
  "hot underline": "border-b-2 border-white bg-[#e8821c] text-[#ffe9c0]",
  box: "rounded-sm bg-[#35355f] text-white",
};

function SpecTree() {
  return (
    <div className="relative w-[150px] overflow-hidden">
      <svg viewBox="0 0 150 510" className="absolute top-0 left-0 h-[510px] w-[150px]" aria-hidden="true">
        <path d="M9 0v489h16M9 25h16M9 180h16M9 211h16M31 34v114h13M31 56h13M31 87h13M31 118h13M31 220v238h13M31 242h13M53 250v176h14M53 273h14M53 304h14M53 335h14M53 366h14M53 397h14" fill="none" stroke="#fff" strokeWidth="2" />
      </svg>
      <ul className="relative pt-[9px]">
        {nodes.map((n, i) => (
          <li key={i} className={`flex h-[31px] items-center whitespace-nowrap ${pads[n.lv]}`}>
            {n.t ? <Toggle open={n.t === "open"} /> : <span className="w-4 shrink-0" />}
            <Icon name={n.icon} className="ml-1.5 h-6 w-6" />
            {n.text && <span className={`ml-1 px-px text-sm leading-5 ${tones[n.tone] || "text-white"}`}>{n.text}</span>}
          </li>
        ))}
      </ul>
    </div>
  );
}

const arcs = [
  "M10 20L57 12h48l5-1 48 7 45 13 29 17 19 23",
  "M10 30L53 23l20-2h40l45 7 42 12 32 17 12 17",
  "M10 39L57 31h56l45 7 42 12 32 17 8 12",
  "M10 49L57 42h38l18-2 45 8 42 12 16 14",
  "M10 58L62 51h51l45 6 40 12 14 10",
  "M10 69L57 61h56l45 6 20 8",
];

function Scene() {
  return (
    <>
      <svg viewBox="0 0 280 90" className="absolute top-[160px] left-[530px] h-[90px] w-[280px]" aria-hidden="true">
        {arcs.map((d) => <path key={d} d={d} fill="none" stroke="#fff" />)}
        {[18, 28, 38, 48, 57, 67].map((y) => <circle key={y} cx="158" cy={y} r="1.800" fill="#fff" />)}
      </svg>
      <svg viewBox="0 0 110 130" className="absolute top-[96px] left-[1076px] h-[130px] w-[110px]" role="img" aria-label="罗盘">
        <g fill="#1f4660" stroke="#cfd0ff" strokeWidth="1.600">
          <path d="M42 20C28 32 19 58 20 87l22-19z" /><path d="M42 20c26 5 49 26 49 56L42 68z" />
          <path d="M27 91l50 9c10 6 6 24-36 24-20 0-31-6-36-11z" /><path d="M42 8v97" stroke="#dcc8ff" />
        </g>
        <circle cx="42" cy="6" r="3.500" fill="#dcd8ff" /><circle cx="41" cy="106" r="5" fill="#c80c10" />
        <g fill="#dede68" fontSize="14"><text x="47" y="13">z</text><text x="94" y="84">y</text><text x="27" y="95">x</text></g>
      </svg>
      <svg viewBox="0 0 50 24" className="absolute top-[622px] left-[1186px] h-6 w-[50px]" aria-hidden="true">
        <path d="M17 2v6l-9 6M17 8l24 5" stroke="#fff" fill="none" /><g fill="#fff" fontSize="13"><text x="3" y="20">x</text><text x="40" y="14">y</text></g>
      </svg>
    </>
  );
}

function Grip() {
  return <span className="flex h-[17px] shrink-0 items-center pl-1"><span className="h-0.5 w-4 border-b border-[#8c8ca0] bg-white" /></span>;
}

function RightDock() {
  return (
    <aside className="flex w-9 shrink-0 flex-col overflow-hidden border-l-2 border-white bg-linear-to-r from-[#f0f0fc] via-[#cfcfe6] via-35% to-[#c0c0d8]">
      <span className="mt-[3px] mb-[7px] ml-1 h-0.5 w-4 shrink-0 border-b border-[#8c8ca0] bg-white" />
      <Tool name="curve" />
      <Grip /><Tool name="gears" drop /><Tool name="geoSet" drop />
      <Grip /><Tool name="catalog" />
      <Grip /><Tool name="ghost" /><Tool name="ghost" /><Tool name="ghost" /><Tool name="ghost" />
      <Grip /><Tool name="arrow" drop /><Tool name="select" drop />
      <Grip /><Tool name="sketch" drop />
      <Grip /><Tool name="thick" /><Tool name="split" /><Tool name="solidA" /><Tool name="solidB" />
    </aside>
  );
}

function BarGrip({ className = "" }) {
  return <span className={`h-4 w-0.5 shrink-0 self-start border-r border-[#8c8ca8] bg-white ${className}`} />;
}

function BarTool({ name, drop }) {
  return (
    <button type="button" aria-label={name} className="relative flex h-[30px] w-7 shrink-0 items-center justify-center">
      {name === "fx" ? <span className="font-['Liberation_Serif',serif] text-lg italic leading-5 text-[#111]">f<span className="text-sm">(x)</span></span> : <Icon name={name} className="h-5 w-5" />}
      {drop && <span className="absolute right-0 bottom-0 h-1 w-2 [clip-path:polygon(0_0,100%_0,50%_100%)] bg-black" />}
    </button>
  );
}

export default function App() {
  return (
    <div className="relative flex h-screen w-full flex-col overflow-hidden bg-[#cfcfe6] font-['Noto_Sans','Noto_Sans_CJK_SC',sans-serif] text-xs text-[#111]">
      <Defs />
      <header className="flex h-[21px] shrink-0 items-center bg-white pl-0.5 text-[#8a8a8a]">
        <AppIcon />
        <h1 className="ml-[3px] flex-1 text-[13px] leading-5">CATIA V5 - [spring]</h1>
        <div className="flex text-[#555]">
          {["M0 6h11", "M1 3h7v7H1zM3 3V1h7v7H8", "M1 1l9 9M10 1L1 10"].map((d, i) => (
            <button key={d} type="button" aria-label={["最小化", "还原", "关闭"][i]} className="flex w-[46px] justify-center">
              <svg viewBox="0 0 11 11" className="h-[11px] w-[11px]" aria-hidden="true"><path d={d} stroke="currentColor" fill="none" /></svg>
            </button>
          ))}
        </div>
      </header>
      <nav className="flex h-5 shrink-0 items-center bg-[#cfcfe6]">
        <span className="flex w-[21px] shrink-0"><AppIcon /></span>
        {["开始", "ENOVIA V5 VPM", "文件", "编辑", "视图", "插入", "工具", "窗口", "帮助"].map((m, i) => (
          <button key={m} type="button" className={`h-[19px] whitespace-nowrap px-[7px] leading-[19px] ${i === 0 ? "bg-[#fde6bd]" : ""} ${i === 1 ? "text-[13px]" : ""}`}>{m}</button>
        ))}
        <div className="ml-auto flex h-full gap-px text-[#777]">
          {["M1 8h6", "M1 5h5v4H1zM3 5V2h6v4H6", "M2 2l6 6M8 2L2 8"].map((d, i) => (
            <button key={d} type="button" aria-label={["最小化文档", "还原文档", "关闭文档"][i]} className="flex w-[18px] items-center justify-center bg-[#ececf0]">
              <svg viewBox="0 0 10 10" className="h-2.5 w-2.5" aria-hidden="true"><path d={d} stroke="currentColor" strokeWidth="1.600" fill="none" /></svg>
            </button>
          ))}
        </div>
      </nav>
      <div className="flex h-[37px] shrink-0 items-center border-b-2 border-[#66667c] bg-linear-to-b from-white via-[#cfcfe6] via-30% to-[#b4b4c8]">
        <BarGrip className="mt-1 ml-[7px]" />
        <div className="ml-2 flex h-[25px] gap-1">
          <Combo label="填充颜色" value="自动" width="w-[67px]" />
          <Combo label="透明度" value="自动" width="w-[67px]" />
          <Combo label="线宽" value="自动" width="w-[67px]" />
          <Combo label="线型" value="自动" width="w-[67px]" />
          <Combo label="点符号" value="✕" width="w-[43px]" />
          <Combo label="渲染样式" value="自动" width="w-[42px]" disabled />
          <Combo label="图层" value="无" width="w-[68px]" />
        </div>
        <div className="flex"><BarTool name="brush" /><BarTool name="wand" /></div>
        <BarGrip className="mt-1 ml-3" />
        <div className="ml-[7px] flex"><BarTool name="envelope" /><BarTool name="envelopes" /><BarTool name="envelopeHelp" /></div>
      </div>

      <main className="flex min-h-0 flex-1 bg-linear-to-b from-[#333366] via-[#42426f] via-50% to-[#adadc0]">
        <div className="flex w-5 shrink-0 flex-col border-x border-[#44448c] bg-[#7b7bff]">
          <button type="button" aria-label="向上滚动" className="flex h-[18px] items-center justify-center"><svg viewBox="0 0 10 10" className="h-2.5 w-2.5" aria-hidden="true"><path d="M5 0l5 10H0z" fill="#0a0a30" /></svg></button>
          <div className="h-[93px] border-b border-[#c8c8ff] bg-[#5c5cb8] bg-[radial-gradient(#8080e8_1px,transparent_1px)] bg-size-[2px_2px]" />
          <div className="flex-1" />
          <button type="button" aria-label="向下滚动" className="flex h-[18px] items-center justify-center border-t border-[#2c2c80]"><svg viewBox="0 0 10 10" className="h-2.5 w-2.5" aria-hidden="true"><path d="M0 0h10L5 10z" fill="#0a0a30" /></svg></button>
        </div>
        <SpecTree />
        <div className="flex-1" />
        <RightDock />
      </main>

      <div className="flex h-[37px] shrink-0 items-center border-b border-[#55556c] bg-linear-to-b from-white via-[#cfcfe6] via-25% to-[#bcbcd0] pt-1">
        <BarGrip className="ml-1" />
        <div className="ml-2 flex">
          <BarTool name="newFile" /><BarTool name="open" /><BarTool name="save" /><BarTool name="print" /><BarTool name="cut" /><BarTool name="copy" /><BarTool name="paste" /><BarTool name="undo" drop /><BarTool name="redo" drop /><BarTool name="help" />
        </div>
        <BarGrip className="ml-3.5" />
        <div className="ml-[5px] flex"><BarTool name="fx" /><BarTool name="chat" /><BarTool name="link" /><BarTool name="sheet" drop /><BarTool name="tree" /></div>
        <div className="ml-auto flex h-full items-center">
          <BarGrip /><span className="ml-2 flex"><BarTool name="photo" /></span>
          <BarGrip className="ml-3" /><span className="ml-1.5 flex"><BarTool name="cubeSwap" /></span>
          <BarGrip className="ml-3" /><span className="mr-2.5 ml-1.5 flex"><BarTool name="measure" /><BarTool name="measureItem" /><BarTool name="weight" /><BarTool name="gear" /><BarTool name="gears" /><BarTool name="eye" /><BarTool name="eye" /><BarTool name="hand" /><span className="ml-7 w-8 self-end text-[9px] font-bold italic text-[#24247c]">CATIA</span></span>
        </div>
      </div>
      <footer className="flex h-[19px] shrink-0 items-center overflow-hidden">
        <p className="flex-1 pt-1 pl-[5px] leading-4">选择作为螺旋半径变化的平面曲线</p>
        <label htmlFor="power" className="pt-1 pr-1.5 leading-4">Spinner,Spinner</label>
        <input id="power" defaultValue="1mm,1mm" className="h-[18px] w-[296px] border-t-2 border-l-2 border-[#6c6c6c] bg-white pt-0.5 text-[13px]" />
        <button type="button" aria-label="命令窗口" className="ml-3 flex h-4 w-4 items-center justify-center border border-[#555] bg-[#c4c4d0]"><svg viewBox="0 0 10 10" className="h-2.5 w-2.5" aria-hidden="true"><path d="M1 2h5v5H1zM8 8h1" fill="none" stroke="#000" strokeWidth="1.500" /></svg></button>
        <svg viewBox="0 0 33 18" className="ml-[7px] h-[18px] w-[33px]" aria-hidden="true"><path d="M0.500 0v18" stroke="#777" /><circle cx="14" cy="10" r="5" fill="#dcdce8" stroke="#aaa" /></svg>
      </footer>

      <Scene />
      <Palette place="top-[256px] left-[1136px] w-[34px]" title="高级曲面">
        <Tool name="extrudeUp" /><Tool name="wrapA" /><Tool name="wrapB" /><Tool name="morph" />
      </Palette>
      <Palette place="top-[343px] left-[1070px] w-9" title="操作">
        <Tool name="grid4" drop /><Tool name="flagCut" drop /><Tool name="dome" drop /><Tool name="bend" drop /><Tool name="translate" drop /><Tool name="extrap" drop />
      </Palette>
      <Palette place="top-[412px] left-[1005px] w-9" title="曲面">
        <Tool name="ripple" drop /><Tool name="sheetUp" drop /><Tool name="sweep" drop /><Tool name="bridge" /><Tool name="blend" /><Tool name="offset" />
      </Palette>
      <Palette place="top-[329px] left-[1194px] w-9" title="线框">
        <Tool name="point" drop /><Tool name="line" drop /><Tool name="plane" drop /><Rule />
        <Tool name="project" drop /><Tool name="trim" /><Tool name="fold" drop /><Rule />
        <Tool name="circle" drop /><Tool name="helix" drop />
      </Palette>
      <HelixDialog />
      <LawDialog />

      <div className="absolute top-[280px] right-0 flex h-[76px] w-4 items-center justify-center rounded-l-2xl bg-[#66666c]/80"><span className="h-4 w-1 rounded-sm bg-white" /></div>
      <svg viewBox="0 0 10 10" className="absolute top-[650px] right-0 h-2.5 w-2.5" aria-hidden="true"><path d="M1 1l4 3 4-3M1 5l4 3 4-3" stroke="#fff" fill="none" strokeWidth="1.500" /></svg>
      <p className="pointer-events-none absolute right-5 bottom-4 flex items-center gap-x-2 whitespace-nowrap text-[32px] leading-10 font-medium text-white [text-shadow:2px_2px_1px_#111,-1px_-1px_0_#333,1px_-1px_0_#333,-1px_1px_0_#333]"><span>头条</span><span><span className="text-[36px]">@</span>汪小同学</span></p>
      <span className="absolute top-[679px] -right-[22px] flex h-11 w-11 items-center rounded-full border-2 border-white bg-[#f0862c] pl-1 text-xs font-bold text-white">82</span>
    </div>
  );
}
